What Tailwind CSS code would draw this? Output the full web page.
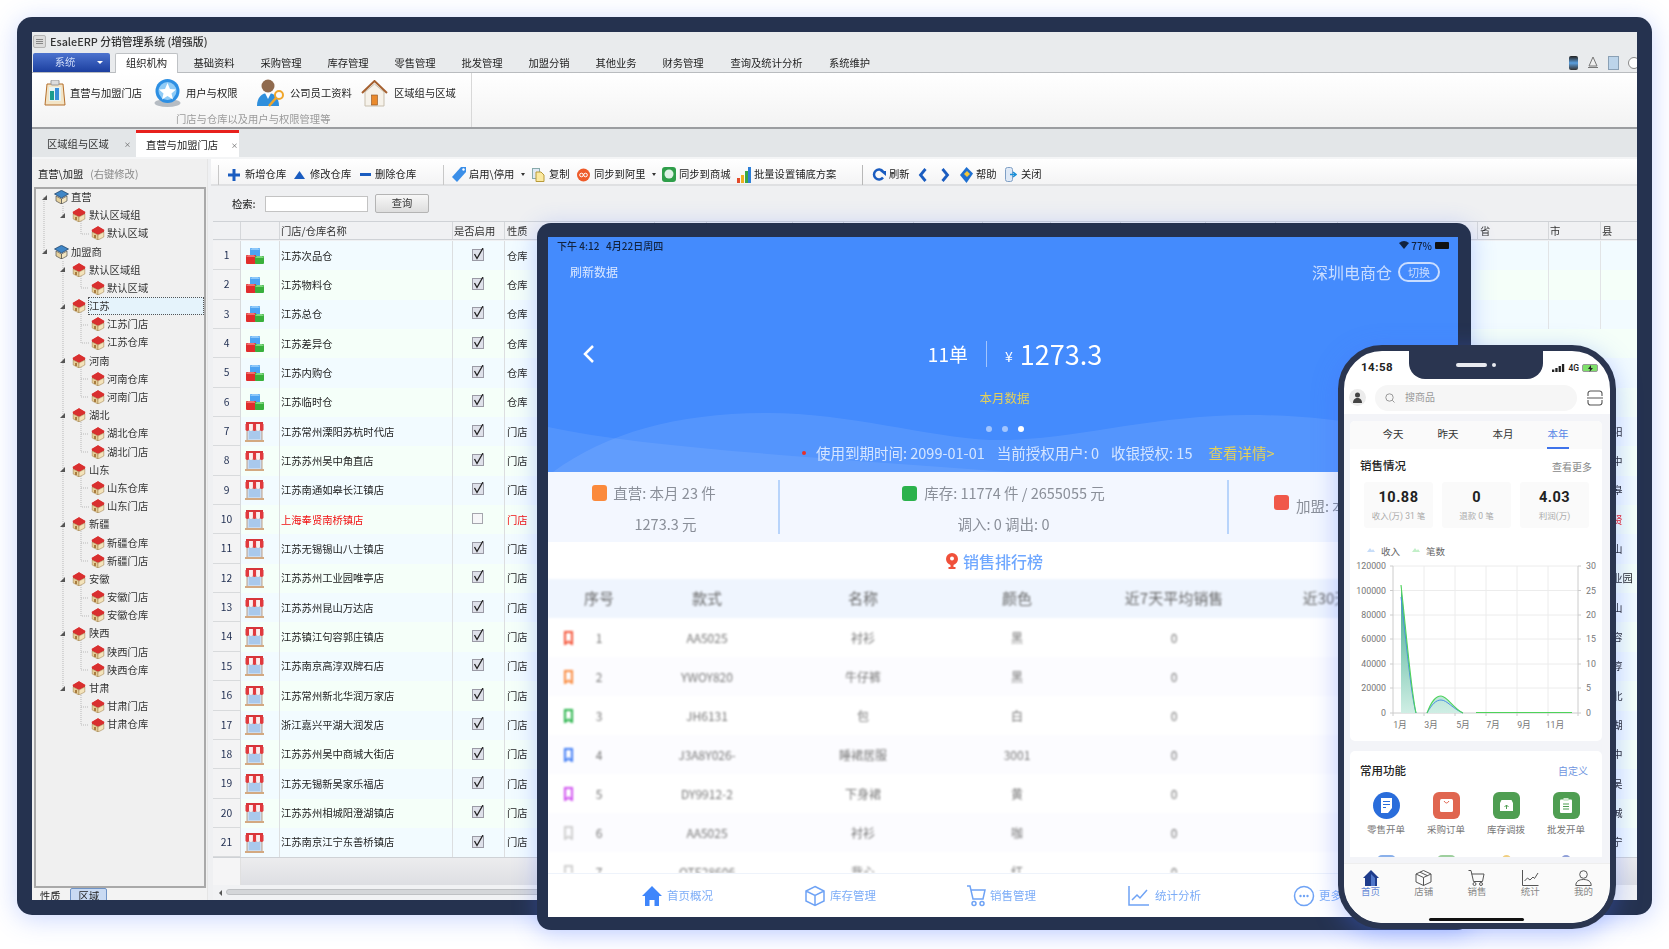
<!DOCTYPE html>
<html lang="zh">
<head>
<meta charset="utf-8">
<title>EsaleERP</title>
<script src="https://cdn.jsdelivr.net/npm/@tailwindcss/browser@4"></script>
</head>
<body class="m-0 bg-white">
<svg class="hidden" width="0" height="0">
  <defs>
    <symbol id="hr" viewBox="0 0 14 14"><polygon points="7,0.3 13.3,4 7,7.6 .7,4" fill="#e23b3b"/><polygon points="7,0.3 13.3,4 13,6 7,9 1,6 .7,4" fill="#d92f2f"/><polygon points="1.2,6 7,9 7,14 1.2,11" fill="#e8cf9a" stroke="#9a7a44" stroke-width=".5"/><polygon points="12.8,6 7,9 7,14 12.8,11" fill="#f3e3bb" stroke="#9a7a44" stroke-width=".5"/><rect x="3" y="9" width="2" height="3" fill="#a87c3f"/></symbol>
    <symbol id="hb" viewBox="0 0 15 14"><polygon points="7.5,.3 14.5,4 7.5,8 .5,4" fill="#3f86c6" stroke="#173a5e" stroke-width=".7"/><polygon points="2,6 7.5,9 7.5,14 2,11" fill="#e6d29f" stroke="#3a3a3a" stroke-width=".6"/><polygon points="13,6 7.5,9 7.5,14 13,11" fill="#f2e5c0" stroke="#3a3a3a" stroke-width=".6"/></symbol>
    <symbol id="bx" viewBox="0 0 18 16"><rect x="4" y="0" width="10" height="9" rx="1" fill="#4da3f2"/><path d="M4 2l2-2h6l2 2z" fill="#8cc8fa"/><rect x="0" y="7" width="10" height="9" rx="1" fill="#e02d2d"/><path d="M0 9l2-2h6l2 2z" fill="#f07070"/><rect x="9" y="8" width="9" height="8" rx="1" fill="#39b03c"/><path d="M9 10l2-2h5l2 2z" fill="#7ed67f"/></symbol>
    <symbol id="st" viewBox="0 0 19 20"><rect x="2" y="8" width="15" height="11" fill="#c8dcf2" stroke="#b98d6a" stroke-width=".8"/><rect x="4" y="9" width="11" height="8" fill="#a9c9ec"/><rect x="0" y="18" width="19" height="2" fill="#d3a981"/><rect x="1" y="0" width="17" height="2" fill="#d7363a"/><path d="M.5 2h3.6v6q-1.800 2-3.600 0zM7.700 2h3.600v6q-1.800 2-3.600 0zM14.900 2h3.600v6q-1.800 2-3.600 0z" fill="#e13a3e"/><path d="M4.100 2h3.600v6q-1.800 2-3.600 0zM11.300 2h3.600v6q-1.800 2-3.600 0z" fill="#fbeeee"/></symbol>
    <symbol id="ck" viewBox="0 0 14 16"><rect x=".5" y="1.500" width="11" height="11" fill="#dfe1ea" stroke="#9a9aa5"/><path d="M2.500 6L5 10.500L11 0" fill="none" stroke="#222" stroke-width="1.300"/></symbol>
    <symbol id="ri" viewBox="0 0 9 14"><path d="M1 1h7v12l-3.500-2.500L1 13z" fill="none" stroke="currentColor" stroke-width="2"/></symbol>
  </defs>
</svg>

<div class="relative w-[1669px] h-[949px] overflow-hidden bg-white pl-[17px] pt-[17px] font-['Noto_Sans_CJK_SC','Liberation_Sans',sans-serif] text-[#222]">

  <!-- desktop frame -->
  <div class="w-[1635px] h-[898px] rounded-[15px] bg-[#25324f] pt-[15px] pb-[15px] pl-[15px] pr-[15px] shadow-[0_4px_26px_rgba(70,110,255,0.28)]">
    <div class="relative w-[1605px] h-[868px] overflow-hidden bg-[#eff0f2] flex flex-col text-[10.3px] leading-none blur-[0.35px]">

      <!-- title -->
      <div class="h-[21px] shrink-0 flex items-center bg-[#e9ebed] pb-[2px]">
        <div class="ml-px w-[13px] h-[13px] border border-[#b5b5b5] rounded-[2px] bg-[#dcdcdc] flex flex-col justify-center gap-px px-[2px]"><span class="h-px bg-[#888]"></span><span class="h-px bg-[#888]"></span><span class="h-px bg-[#888]"></span></div>
        <span class="ml-[4px] text-[10.8px] font-medium text-[#333]">EsaleERP 分销管理系统 (增强版)</span>
      </div>

      <!-- menu -->
      <div class="h-[20px] shrink-0 flex items-end bg-[#e9ebed] border-b border-[#b9bcbf] relative">
        <div class="ml-px w-[77px] h-[19px] rounded-t-[2px] bg-gradient-to-b from-[#4d73cf] to-[#1c3f9f] flex items-center text-white"><span class="w-[64px] text-center text-[#cfdcf8]">系统</span><span class="w-0 h-0 border-x-[3px] border-x-transparent border-t-[3px] border-t-white"></span></div>
        <div class="ml-[5px] w-[63px] h-[20px] -mb-px bg-white border border-b-0 border-[#bfc2c5] rounded-t-[2px] flex items-center justify-center">组织机构</div>
        <div class="ml-[2.500px] flex h-[19px] items-center text-center pt-[2px]">
          <span class="w-[67px]">基础资料</span><span class="w-[67px]">采购管理</span><span class="w-[67px]">库存管理</span><span class="w-[67px]">零售管理</span><span class="w-[67px]">批发管理</span><span class="w-[67px]">加盟分销</span><span class="w-[67px]">其他业务</span><span class="w-[67px]">财务管理</span><span class="w-[100px]">查询及统计分析</span><span class="w-[66px]">系统维护</span>
        </div>
        <div class="ml-auto h-[19px] flex items-center gap-[9px] pr-0 -mr-[3px]">
          <span class="w-[9px] h-[14px] rounded-[2px] bg-gradient-to-b from-[#222] via-[#5aa0e0] to-[#333]"></span>
          <svg width="12" height="13" viewBox="0 0 12 13"><path d="M6 1L10 10H2zM1 11.500h10" fill="#eee" stroke="#777"/></svg>
          <span class="w-[11px] h-[14px] bg-[#bcd4ea] border border-[#8aa0b5]"></span>
          <span class="w-[12px] h-[12px] rounded-full border border-[#888] bg-white"></span>
        </div>
      </div>

      <!-- ribbon -->
      <div class="h-[54px] shrink-0 relative bg-gradient-to-b from-white to-[#f3f3f3] flex">
        <div class="w-[440px] border-r border-[#d8d8d8] flex flex-col">
          <div class="h-[40px] flex items-center">
            <svg class="ml-[12px] shrink-0" width="22" height="26" viewBox="0 0 22 26"><path d="M3 4h16l2 21H1z" fill="#f3e4c6" stroke="#b5702c"/><rect x="7" y="0" width="8" height="5" rx="1" fill="#ddd" stroke="#999"/><rect x="5" y="7" width="12" height="14" fill="#e6f3f3"/><rect x="6" y="11" width="4" height="9" fill="#1c9c8c"/><rect x="11" y="8" width="4" height="12" fill="#3a8ed8"/></svg>
            <span class="ml-[4px] w-[72px] whitespace-nowrap">直营与加盟门店</span>
            <svg class="ml-[12px] shrink-0" width="27" height="28" viewBox="0 0 27 28"><ellipse cx="13.500" cy="24" rx="13" ry="4" fill="#b6bcc3"/><circle cx="13.500" cy="12" r="12" fill="#2d8fe3"/><circle cx="13.500" cy="12" r="9" fill="#8fcbf6"/><polygon points="13.500,4 16,10 22,10.500 17.500,14.500 19,20.500 13.500,17 8,20.500 9.500,14.500 5,10.500 11,10" fill="#fff"/></svg>
            <span class="ml-[5px] w-[52px] whitespace-nowrap">用户与权限</span>
            <svg class="ml-[18px] shrink-0" width="29" height="30" viewBox="0 0 29 30"><circle cx="12" cy="8" r="6.500" fill="#8f6a4e"/><path d="M1 28c0-9 5-13 11-13s11 4 11 13z" fill="#2f8fdc"/><path d="M9 15l3 6 3-6z" fill="#fff"/><circle cx="23" cy="17" r="4" fill="none" stroke="#f0a62b" stroke-width="2"/><path d="M20 20l-7 8" stroke="#f0a62b" stroke-width="2.500"/></svg>
            <span class="ml-[5px] w-[62px] whitespace-nowrap">公司员工资料</span>
            <svg class="ml-[9px] shrink-0" width="27" height="27" viewBox="0 0 27 27"><path d="M4 12v14h19V12L13.500 4z" fill="#f6f2ea" stroke="#c8bfae"/><path d="M1 13L13.500 1 26 13" fill="none" stroke="#a5602f" stroke-width="2"/><rect x="10.500" y="15" width="6" height="10" fill="#ea8a2c" stroke="#8a4f1f" stroke-width=".6"/></svg>
            <span class="ml-[6px] whitespace-nowrap">区域组与区域</span>
          </div>
          <div class="pl-[144px] mt-[1px] text-[#9a9a9a] whitespace-nowrap">门店与仓库以及用户与权限管理等</div>
        </div>
      </div>
      <div class="h-[2px] shrink-0 bg-[#9b9da0]"></div>

      <!-- doc tabs -->
      <div class="h-[28px] shrink-0 bg-[#e3e6e8] flex items-end pl-px">
        <div class="w-[103px] h-[26px] flex items-center pl-[14px] text-[#333]"><span class="w-[77px]">区域组与区域</span><span class="text-[7px] text-[#555]">×</span></div>
        <div class="w-[103px] h-[27px] bg-white border-t-[3px] border-[#e8201c] flex items-center pl-[10px]"><span class="w-[85px]">直营与加盟门店</span><span class="text-[7px] text-[#555]">×</span></div>
      </div>
      <div class="h-[2px] shrink-0 bg-[#f4f5f6]"></div>

      <!-- main -->
      <div class="flex-1 min-h-0 flex">
        <!-- left -->
        <div class="w-[175px] shrink-0 flex flex-col bg-[#f0f0f0]">
          <div class="h-[28px] shrink-0 flex items-center pl-[6px] pt-[2px]"><span>直营\加盟</span><span class="ml-[7px] text-[#8a8a8a]">(右键修改)</span></div>
          <div class="ml-[2px] w-[172px] h-[701px] shrink-0 border-2 border-[#a9a9a9] bg-[#f0f0f0]">
            <div class="relative text-[#333] -mt-px">
              <svg class="absolute left-0 top-0" width="168" height="545" viewBox="0 0 168 545"><path d="M8 9V64M27 18V27M27 73V501M45 27V46H53M45 82V100H53M45 118V155H53M45 137H53M45 173V209H53M45 191H53M45 228V264H53M45 246H53M45 282V319H53M45 300H53M45 337V373H53M45 355H53M45 391V428H53M45 410H53M45 446V482H53M45 464H53M45 501V537H53M45 519H53" fill="none" stroke="#b9b9b9" stroke-dasharray="1 1"/></svg>
              <div class="relative h-[18.2px] flex items-center pl-[6px]"><svg width="5" height="5" viewBox="0 0 5 5"><path d="M5 0V5H0z" fill="#555"/></svg><svg class="ml-[7px]" width="15" height="14"><use href="#hb"/></svg><span class="ml-[2px]">直营</span></div>
              <div class="relative h-[18.2px] flex items-center pl-[24px]"><svg width="5" height="5" viewBox="0 0 5 5"><path d="M5 0V5H0z" fill="#555"/></svg><svg class="ml-[7px]" width="14" height="14"><use href="#hr"/></svg><span class="ml-[3px]">默认区域组</span></div>
              <div class="relative h-[18.2px] flex items-center pl-[55px]"><svg width="14" height="14"><use href="#hr"/></svg><span class="ml-[2px]">默认区域</span></div>
              <div class="relative h-[18.2px] flex items-center pl-[6px]"><svg width="5" height="5" viewBox="0 0 5 5"><path d="M5 0V5H0z" fill="#555"/></svg><svg class="ml-[7px]" width="15" height="14"><use href="#hb"/></svg><span class="ml-[2px]">加盟商</span></div>
              <div class="relative h-[18.2px] flex items-center pl-[24px]"><svg width="5" height="5" viewBox="0 0 5 5"><path d="M5 0V5H0z" fill="#555"/></svg><svg class="ml-[7px]" width="14" height="14"><use href="#hr"/></svg><span class="ml-[3px]">默认区域组</span></div>
              <div class="relative h-[18.2px] flex items-center pl-[55px]"><svg width="14" height="14"><use href="#hr"/></svg><span class="ml-[2px]">默认区域</span></div>
              <div class="relative h-[18.2px] flex items-center pl-[24px]"><svg width="5" height="5" viewBox="0 0 5 5"><path d="M5 0V5H0z" fill="#555"/></svg><svg class="ml-[7px]" width="14" height="14"><use href="#hr"/></svg><span class="ml-[2px] w-[116px] h-[18px] flex items-center bg-[#e5f3fb] border border-dotted border-[#555]">江苏</span></div>
              <div class="relative h-[18.2px] flex items-center pl-[55px]"><svg width="14" height="14"><use href="#hr"/></svg><span class="ml-[2px]">江苏门店</span></div>
              <div class="relative h-[18.2px] flex items-center pl-[55px]"><svg width="14" height="14"><use href="#hr"/></svg><span class="ml-[2px]">江苏仓库</span></div>
              <div class="relative h-[18.2px] flex items-center pl-[24px]"><svg width="5" height="5" viewBox="0 0 5 5"><path d="M5 0V5H0z" fill="#555"/></svg><svg class="ml-[7px]" width="14" height="14"><use href="#hr"/></svg><span class="ml-[3px]">河南</span></div>
              <div class="relative h-[18.2px] flex items-center pl-[55px]"><svg width="14" height="14"><use href="#hr"/></svg><span class="ml-[2px]">河南仓库</span></div>
              <div class="relative h-[18.2px] flex items-center pl-[55px]"><svg width="14" height="14"><use href="#hr"/></svg><span class="ml-[2px]">河南门店</span></div>
              <div class="relative h-[18.2px] flex items-center pl-[24px]"><svg width="5" height="5" viewBox="0 0 5 5"><path d="M5 0V5H0z" fill="#555"/></svg><svg class="ml-[7px]" width="14" height="14"><use href="#hr"/></svg><span class="ml-[3px]">湖北</span></div>
              <div class="relative h-[18.2px] flex items-center pl-[55px]"><svg width="14" height="14"><use href="#hr"/></svg><span class="ml-[2px]">湖北仓库</span></div>
              <div class="relative h-[18.2px] flex items-center pl-[55px]"><svg width="14" height="14"><use href="#hr"/></svg><span class="ml-[2px]">湖北门店</span></div>
              <div class="relative h-[18.2px] flex items-center pl-[24px]"><svg width="5" height="5" viewBox="0 0 5 5"><path d="M5 0V5H0z" fill="#555"/></svg><svg class="ml-[7px]" width="14" height="14"><use href="#hr"/></svg><span class="ml-[3px]">山东</span></div>
              <div class="relative h-[18.2px] flex items-center pl-[55px]"><svg width="14" height="14"><use href="#hr"/></svg><span class="ml-[2px]">山东仓库</span></div>
              <div class="relative h-[18.2px] flex items-center pl-[55px]"><svg width="14" height="14"><use href="#hr"/></svg><span class="ml-[2px]">山东门店</span></div>
              <div class="relative h-[18.2px] flex items-center pl-[24px]"><svg width="5" height="5" viewBox="0 0 5 5"><path d="M5 0V5H0z" fill="#555"/></svg><svg class="ml-[7px]" width="14" height="14"><use href="#hr"/></svg><span class="ml-[3px]">新疆</span></div>
              <div class="relative h-[18.2px] flex items-center pl-[55px]"><svg width="14" height="14"><use href="#hr"/></svg><span class="ml-[2px]">新疆仓库</span></div>
              <div class="relative h-[18.2px] flex items-center pl-[55px]"><svg width="14" height="14"><use href="#hr"/></svg><span class="ml-[2px]">新疆门店</span></div>
              <div class="relative h-[18.2px] flex items-center pl-[24px]"><svg width="5" height="5" viewBox="0 0 5 5"><path d="M5 0V5H0z" fill="#555"/></svg><svg class="ml-[7px]" width="14" height="14"><use href="#hr"/></svg><span class="ml-[3px]">安徽</span></div>
              <div class="relative h-[18.2px] flex items-center pl-[55px]"><svg width="14" height="14"><use href="#hr"/></svg><span class="ml-[2px]">安徽门店</span></div>
              <div class="relative h-[18.2px] flex items-center pl-[55px]"><svg width="14" height="14"><use href="#hr"/></svg><span class="ml-[2px]">安徽仓库</span></div>
              <div class="relative h-[18.2px] flex items-center pl-[24px]"><svg width="5" height="5" viewBox="0 0 5 5"><path d="M5 0V5H0z" fill="#555"/></svg><svg class="ml-[7px]" width="14" height="14"><use href="#hr"/></svg><span class="ml-[3px]">陕西</span></div>
              <div class="relative h-[18.2px] flex items-center pl-[55px]"><svg width="14" height="14"><use href="#hr"/></svg><span class="ml-[2px]">陕西门店</span></div>
              <div class="relative h-[18.2px] flex items-center pl-[55px]"><svg width="14" height="14"><use href="#hr"/></svg><span class="ml-[2px]">陕西仓库</span></div>
              <div class="relative h-[18.2px] flex items-center pl-[24px]"><svg width="5" height="5" viewBox="0 0 5 5"><path d="M5 0V5H0z" fill="#555"/></svg><svg class="ml-[7px]" width="14" height="14"><use href="#hr"/></svg><span class="ml-[3px]">甘肃</span></div>
              <div class="relative h-[18.2px] flex items-center pl-[55px]"><svg width="14" height="14"><use href="#hr"/></svg><span class="ml-[2px]">甘肃门店</span></div>
              <div class="relative h-[18.2px] flex items-center pl-[55px]"><svg width="14" height="14"><use href="#hr"/></svg><span class="ml-[2px]">甘肃仓库</span></div>
            </div>
          </div>
          <div class="flex-1 flex items-start bg-[#f3f3f3]">
            <span class="ml-[8px] mt-[3px]">性质</span>
            <span class="ml-[9px] w-[37px] h-[16px] bg-[#c9daf2] border border-[#6f93c6] rounded-t-[2px] pl-[8px] pt-[2px]">区域</span>
          </div>
        </div>

        <!-- right -->
        <div class="flex-1 min-w-0 flex flex-col pl-[3px] border-l border-[#e5e5e5]">
          <!-- toolbar -->
          <div class="h-[27px] shrink-0 flex items-center pt-[6px] bg-gradient-to-b from-white to-[#f4f4f5] border-b-2 border-[#dfe0e2] whitespace-nowrap">
            <span class="ml-[7px] w-px h-[20px] shrink-0 bg-[#c8c8c8]"></span>
            <svg class="ml-[9px] shrink-0" width="12" height="12" viewBox="0 0 12 12"><path d="M4.500 0h3v4.500H12v3H7.500V12h-3V7.500H0v-3h4.500z" fill="#1a5cc0"/></svg>
            <span class="ml-[5px] w-[41px] shrink-0">新增仓库</span>
            <svg class="ml-[8px] shrink-0" width="11" height="8" viewBox="0 0 11 8"><path d="M5.500 0L11 8H0z" fill="#1a5cc0"/></svg>
            <span class="ml-[5px] w-[41px] shrink-0">修改仓库</span>
            <span class="ml-[9px] w-[11px] h-[3px] shrink-0 bg-[#1a5cc0]"></span>
            <span class="ml-[4px] w-[41px] shrink-0">删除仓库</span>
            <span class="ml-[27px] w-px h-[20px] shrink-0 bg-[#c8c8c8]"></span>
            <svg class="ml-[8px] shrink-0" width="14" height="15" viewBox="0 0 14 15"><path d="M9 0h5v5L5 15 0 10z" fill="#3a8ee8"/><circle cx="11.500" cy="2.500" r="1.200" fill="#fff"/></svg>
            <span class="ml-[3px] w-[44px] shrink-0">启用\停用</span>
            <span class="ml-[8px] shrink-0 w-0 h-0 border-x-[2.500px] border-x-transparent border-t-[3px] border-t-[#333]"></span>
            <svg class="ml-[7px] shrink-0" width="13" height="14" viewBox="0 0 13 14"><rect x=".5" y=".5" width="7" height="10" fill="#dfe9f6" stroke="#8aa"/><path d="M4 4h5l3 3v6.500H4z" fill="#fbe9a0" stroke="#b89a3a"/></svg>
            <span class="ml-[4px] w-[21px] shrink-0">复制</span>
            <svg class="ml-[7px] shrink-0" width="13" height="14" viewBox="0 0 13 14"><circle cx="6.500" cy="7" r="6.500" fill="#ee5b2a"/><circle cx="4.500" cy="7" r="1.800" fill="none" stroke="#fff"/><circle cx="8.500" cy="7" r="1.800" fill="none" stroke="#fff"/></svg>
            <span class="ml-[4px] w-[51px] shrink-0">同步到阿里</span>
            <span class="ml-[7px] shrink-0 w-0 h-0 border-x-[2.500px] border-x-transparent border-t-[3px] border-t-[#333]"></span>
            <svg class="ml-[6px] shrink-0" width="14" height="15" viewBox="0 0 14 15"><rect width="14" height="15" rx="3" fill="#2f9e4a"/><circle cx="7" cy="7" r="4.500" fill="#dff2e6"/></svg>
            <span class="ml-[3px] w-[52px] shrink-0">同步到商城</span>
            <svg class="ml-[6px] shrink-0" width="14" height="16" viewBox="0 0 14 16"><rect x="0" y="11" width="3" height="5" fill="#e24a2a"/><rect x="4" y="8" width="3" height="8" fill="#f0b020"/><rect x="8" y="4" width="3" height="12" fill="#39a845"/><rect x="11" y="0" width="3" height="16" fill="#2d7fd8"/></svg>
            <span class="ml-[3px] w-[83px] shrink-0">批量设置铺底方案</span>
            <span class="ml-[25px] w-px h-[20px] shrink-0 bg-[#b8b8b8]"></span>
            <svg class="ml-[9px] shrink-0" width="14" height="13" viewBox="0 0 14 13"><path d="M11 3.500A5 5 0 1 0 11 9.500" fill="none" stroke="#1a5cc0" stroke-width="2.500"/><path d="M8 3h6v5z" fill="#1a5cc0"/></svg>
            <span class="ml-[3px] w-[21px] shrink-0">刷新</span>
            <svg class="ml-[8px] shrink-0" width="10" height="14" viewBox="0 0 10 14"><path d="M7.500 1L2.500 7l5 6" fill="none" stroke="#1a5cc0" stroke-width="2.800"/></svg>
            <svg class="ml-[12px] shrink-0" width="10" height="14" viewBox="0 0 10 14"><path d="M2.500 1l5 6-5 6" fill="none" stroke="#1a5cc0" stroke-width="2.800"/></svg>
            <svg class="ml-[10px] shrink-0" width="13" height="16" viewBox="0 0 13 16"><path d="M6.500 0L13 6.500 6.500 16 0 8z" fill="#1d6fd0"/><path d="M4 7l3-3 3 3-3 3z" fill="#f3c63a"/></svg>
            <span class="ml-[3px] w-[21px] shrink-0">帮助</span>
            <svg class="ml-[8px] shrink-0" width="12" height="15" viewBox="0 0 12 15"><rect x=".5" y=".5" width="7" height="14" rx="2" fill="#dfe9f6" stroke="#7f9fc5"/><path d="M5 7.500h5M8 5l3 2.500L8 10" fill="none" stroke="#1a8fd8" stroke-width="1.500"/></svg>
            <span class="ml-[4px] shrink-0">关闭</span>
          </div>
          <!-- search -->
          <div class="h-[35px] shrink-0 flex items-center text-[#333]">
            <span class="ml-[21px] w-[32px] font-medium pt-[2px]">检索:</span>
            <span class="w-[103px] h-[16px] bg-white border border-[#c3c3c3] ml-px"></span>
            <span class="ml-[7px] w-[54px] h-[19px] rounded-[2px] border border-[#b4b4b4] bg-gradient-to-b from-[#f7f7f7] to-[#dedede] flex items-center justify-center">查询</span>
          </div>
          <!-- grid -->
          <div class="flex-1 min-h-0 ml-[2px] flex flex-col">
            <div class="h-[19px] shrink-0 flex border-y border-[#cfd2d6] bg-[#f0f1f3] text-[#333] items-stretch">
              <span class="w-[28px] border-r border-[#d5d7da]"></span>
              <span class="w-[39px] border-r border-[#d5d7da]"></span>
              <span class="w-[173px] border-r border-[#d5d7da] flex items-center pl-px pt-[2px]">门店/仓库名称</span>
              <span class="w-[52px] border-r border-[#d5d7da] flex items-center pl-px pt-[2px]">是否启用</span>
              <span class="w-[150px] border-r border-[#d5d7da] flex items-center pl-[2px] pt-[2px]">性质</span>
              <span class="w-[52px] border-r border-[#d5d7da]"></span><span class="w-[86px] border-r border-[#d5d7da]"></span><span class="w-[51px] border-r border-[#d5d7da]"></span><span class="w-[70px] border-r border-[#d5d7da]"></span><span class="w-[69px] border-r border-[#d5d7da]"></span><span class="w-[68px] border-r border-[#d5d7da]"></span><span class="w-[70px] border-r border-[#d5d7da]"></span><span class="w-[85px] border-r border-[#d5d7da]"></span><span class="w-[70px] border-r border-[#d5d7da]"></span><span class="w-[62px] border-r border-[#d5d7da]"></span><span class="w-[140px] border-r border-[#d5d7da]"></span>
              <span class="w-[71px] border-r border-[#d5d7da] flex items-center pl-[2px] pt-[2px]">省</span>
              <span class="w-[52px] border-r border-[#d5d7da] flex items-center pl-px pt-[2px]">市</span>
              <span class="flex-1 flex items-center pl-px pt-[2px]">县</span>
            </div>
            <div class="h-[1px] shrink-0"></div>

            <div class="flex h-[29.35px] bg-[#f2fbff]"><span class="w-[28px] bg-[#f3f3f4] border-b border-r border-[#d8dadc] flex items-center justify-center text-[#1f2d50]">1</span><span class="w-[39px] border-r border-[#dcdee0] flex items-center pl-[5px]"><svg width="18" height="16"><use href="#bx"/></svg></span><span class="w-[173px] border-r border-[#dcdee0] flex items-center pl-px">江苏次品仓</span><span class="w-[52px] border-r border-[#dcdee0] flex items-center justify-center"><svg width="14" height="16"><use href="#ck"/></svg></span><span class="w-[973px] flex items-center pl-[2px]">仓库</span><span class="w-[71px] border-r border-[#e2e4e6]"></span><span class="w-[52px] border-r border-[#e2e4e6]"></span><span class="flex-1"></span></div>
            <div class="flex h-[29.35px] bg-[#f5fff9]"><span class="w-[28px] bg-[#f3f3f4] border-b border-r border-[#d8dadc] flex items-center justify-center text-[#1f2d50]">2</span><span class="w-[39px] border-r border-[#dcdee0] flex items-center pl-[5px]"><svg width="18" height="16"><use href="#bx"/></svg></span><span class="w-[173px] border-r border-[#dcdee0] flex items-center pl-px">江苏物料仓</span><span class="w-[52px] border-r border-[#dcdee0] flex items-center justify-center"><svg width="14" height="16"><use href="#ck"/></svg></span><span class="w-[973px] flex items-center pl-[2px]">仓库</span><span class="w-[71px] border-r border-[#e2e4e6]"></span><span class="w-[52px] border-r border-[#e2e4e6]"></span><span class="flex-1"></span></div>
            <div class="flex h-[29.35px] bg-[#f2fbff]"><span class="w-[28px] bg-[#f3f3f4] border-b border-r border-[#d8dadc] flex items-center justify-center text-[#1f2d50]">3</span><span class="w-[39px] border-r border-[#dcdee0] flex items-center pl-[5px]"><svg width="18" height="16"><use href="#bx"/></svg></span><span class="w-[173px] border-r border-[#dcdee0] flex items-center pl-px">江苏总仓</span><span class="w-[52px] border-r border-[#dcdee0] flex items-center justify-center"><svg width="14" height="16"><use href="#ck"/></svg></span><span class="w-[973px] flex items-center pl-[2px]">仓库</span><span class="w-[71px] border-r border-[#e2e4e6]"></span><span class="w-[52px] border-r border-[#e2e4e6]"></span><span class="flex-1"></span></div>
            <div class="flex h-[29.35px] bg-[#f5fff9]"><span class="w-[28px] bg-[#f3f3f4] border-b border-r border-[#d8dadc] flex items-center justify-center text-[#1f2d50]">4</span><span class="w-[39px] border-r border-[#dcdee0] flex items-center pl-[5px]"><svg width="18" height="16"><use href="#bx"/></svg></span><span class="w-[173px] border-r border-[#dcdee0] flex items-center pl-px">江苏差异仓</span><span class="w-[52px] border-r border-[#dcdee0] flex items-center justify-center"><svg width="14" height="16"><use href="#ck"/></svg></span><span class="w-[973px] flex items-center pl-[2px]">仓库</span><span class="w-[71px]"></span><span class="w-[52px]"></span><span class="flex-1"></span></div>
            <div class="flex h-[29.35px] bg-[#f2fbff]"><span class="w-[28px] bg-[#f3f3f4] border-b border-r border-[#d8dadc] flex items-center justify-center text-[#1f2d50]">5</span><span class="w-[39px] border-r border-[#dcdee0] flex items-center pl-[5px]"><svg width="18" height="16"><use href="#bx"/></svg></span><span class="w-[173px] border-r border-[#dcdee0] flex items-center pl-px">江苏内购仓</span><span class="w-[52px] border-r border-[#dcdee0] flex items-center justify-center"><svg width="14" height="16"><use href="#ck"/></svg></span><span class="w-[973px] flex items-center pl-[2px]">仓库</span><span class="w-[71px]"></span><span class="w-[52px]"></span><span class="flex-1"></span></div>
            <div class="flex h-[29.35px] bg-[#f5fff9]"><span class="w-[28px] bg-[#f3f3f4] border-b border-r border-[#d8dadc] flex items-center justify-center text-[#1f2d50]">6</span><span class="w-[39px] border-r border-[#dcdee0] flex items-center pl-[5px]"><svg width="18" height="16"><use href="#bx"/></svg></span><span class="w-[173px] border-r border-[#dcdee0] flex items-center pl-px">江苏临时仓</span><span class="w-[52px] border-r border-[#dcdee0] flex items-center justify-center"><svg width="14" height="16"><use href="#ck"/></svg></span><span class="w-[973px] flex items-center pl-[2px]">仓库</span><span class="w-[71px]"></span><span class="w-[52px]"></span><span class="flex-1"></span></div>
            <div class="flex h-[29.35px] bg-[#f2fbff]"><span class="w-[28px] bg-[#f3f3f4] border-b border-r border-[#d8dadc] flex items-center justify-center text-[#1f2d50]">7</span><span class="w-[39px] border-r border-[#dcdee0] flex items-center pl-[4px]"><svg width="19" height="20"><use href="#st"/></svg></span><span class="w-[173px] border-r border-[#dcdee0] flex items-center pl-px">江苏常州溧阳苏杭时代店</span><span class="w-[52px] border-r border-[#dcdee0] flex items-center justify-center"><svg width="14" height="16"><use href="#ck"/></svg></span><span class="w-[973px] flex items-center pl-[2px]">门店</span><span class="w-[71px]"></span><span class="w-[52px]"></span><span class="flex-1 flex items-center pl-px">溧阳</span></div>
            <div class="flex h-[29.35px] bg-[#f5fff9]"><span class="w-[28px] bg-[#f3f3f4] border-b border-r border-[#d8dadc] flex items-center justify-center text-[#1f2d50]">8</span><span class="w-[39px] border-r border-[#dcdee0] flex items-center pl-[4px]"><svg width="19" height="20"><use href="#st"/></svg></span><span class="w-[173px] border-r border-[#dcdee0] flex items-center pl-px">江苏苏州吴中角直店</span><span class="w-[52px] border-r border-[#dcdee0] flex items-center justify-center"><svg width="14" height="16"><use href="#ck"/></svg></span><span class="w-[973px] flex items-center pl-[2px]">门店</span><span class="w-[71px]"></span><span class="w-[52px]"></span><span class="flex-1 flex items-center pl-px">吴中</span></div>
            <div class="flex h-[29.35px] bg-[#f2fbff]"><span class="w-[28px] bg-[#f3f3f4] border-b border-r border-[#d8dadc] flex items-center justify-center text-[#1f2d50]">9</span><span class="w-[39px] border-r border-[#dcdee0] flex items-center pl-[4px]"><svg width="19" height="20"><use href="#st"/></svg></span><span class="w-[173px] border-r border-[#dcdee0] flex items-center pl-px">江苏南通如皋长江镇店</span><span class="w-[52px] border-r border-[#dcdee0] flex items-center justify-center"><svg width="14" height="16"><use href="#ck"/></svg></span><span class="w-[973px] flex items-center pl-[2px]">门店</span><span class="w-[71px]"></span><span class="w-[52px]"></span><span class="flex-1 flex items-center pl-px">如皋</span></div>
            <div class="flex h-[29.35px] bg-[#f5fff9] text-[#f01010]"><span class="w-[28px] bg-[#f3f3f4] border-b border-r border-[#d8dadc] flex items-center justify-center text-[#1f2d50]">10</span><span class="w-[39px] border-r border-[#dcdee0] flex items-center pl-[4px]"><svg width="19" height="20"><use href="#st"/></svg></span><span class="w-[173px] border-r border-[#dcdee0] flex items-center pl-px">上海奉贤南桥镇店</span><span class="w-[52px] border-r border-[#dcdee0] flex items-center justify-center pr-[3px] pb-[3px]"><span class="w-[11px] h-[11px] bg-[#f6f6f8] border border-[#a5a5ad]"></span></span><span class="w-[973px] flex items-center pl-[2px]">门店</span><span class="w-[71px]"></span><span class="w-[52px]"></span><span class="flex-1 flex items-center pl-px">奉贤</span></div>
            <div class="flex h-[29.35px] bg-[#f2fbff]"><span class="w-[28px] bg-[#f3f3f4] border-b border-r border-[#d8dadc] flex items-center justify-center text-[#1f2d50]">11</span><span class="w-[39px] border-r border-[#dcdee0] flex items-center pl-[4px]"><svg width="19" height="20"><use href="#st"/></svg></span><span class="w-[173px] border-r border-[#dcdee0] flex items-center pl-px">江苏无锡锡山八士镇店</span><span class="w-[52px] border-r border-[#dcdee0] flex items-center justify-center"><svg width="14" height="16"><use href="#ck"/></svg></span><span class="w-[973px] flex items-center pl-[2px]">门店</span><span class="w-[71px]"></span><span class="w-[52px]"></span><span class="flex-1 flex items-center pl-px">锡山</span></div>
            <div class="flex h-[29.35px] bg-[#f5fff9]"><span class="w-[28px] bg-[#f3f3f4] border-b border-r border-[#d8dadc] flex items-center justify-center text-[#1f2d50]">12</span><span class="w-[39px] border-r border-[#dcdee0] flex items-center pl-[4px]"><svg width="19" height="20"><use href="#st"/></svg></span><span class="w-[173px] border-r border-[#dcdee0] flex items-center pl-px">江苏苏州工业园唯亭店</span><span class="w-[52px] border-r border-[#dcdee0] flex items-center justify-center"><svg width="14" height="16"><use href="#ck"/></svg></span><span class="w-[973px] flex items-center pl-[2px]">门店</span><span class="w-[71px]"></span><span class="w-[52px]"></span><span class="flex-1 flex items-center pl-px whitespace-nowrap">工业园</span></div>
            <div class="flex h-[29.35px] bg-[#f2fbff]"><span class="w-[28px] bg-[#f3f3f4] border-b border-r border-[#d8dadc] flex items-center justify-center text-[#1f2d50]">13</span><span class="w-[39px] border-r border-[#dcdee0] flex items-center pl-[4px]"><svg width="19" height="20"><use href="#st"/></svg></span><span class="w-[173px] border-r border-[#dcdee0] flex items-center pl-px">江苏苏州昆山万达店</span><span class="w-[52px] border-r border-[#dcdee0] flex items-center justify-center"><svg width="14" height="16"><use href="#ck"/></svg></span><span class="w-[973px] flex items-center pl-[2px]">门店</span><span class="w-[71px]"></span><span class="w-[52px]"></span><span class="flex-1 flex items-center pl-px">昆山</span></div>
            <div class="flex h-[29.35px] bg-[#f5fff9]"><span class="w-[28px] bg-[#f3f3f4] border-b border-r border-[#d8dadc] flex items-center justify-center text-[#1f2d50]">14</span><span class="w-[39px] border-r border-[#dcdee0] flex items-center pl-[4px]"><svg width="19" height="20"><use href="#st"/></svg></span><span class="w-[173px] border-r border-[#dcdee0] flex items-center pl-px">江苏镇江句容郭庄镇店</span><span class="w-[52px] border-r border-[#dcdee0] flex items-center justify-center"><svg width="14" height="16"><use href="#ck"/></svg></span><span class="w-[973px] flex items-center pl-[2px]">门店</span><span class="w-[71px]"></span><span class="w-[52px]"></span><span class="flex-1 flex items-center pl-px">句容</span></div>
            <div class="flex h-[29.35px] bg-[#f2fbff]"><span class="w-[28px] bg-[#f3f3f4] border-b border-r border-[#d8dadc] flex items-center justify-center text-[#1f2d50]">15</span><span class="w-[39px] border-r border-[#dcdee0] flex items-center pl-[4px]"><svg width="19" height="20"><use href="#st"/></svg></span><span class="w-[173px] border-r border-[#dcdee0] flex items-center pl-px">江苏南京高淳双牌石店</span><span class="w-[52px] border-r border-[#dcdee0] flex items-center justify-center"><svg width="14" height="16"><use href="#ck"/></svg></span><span class="w-[973px] flex items-center pl-[2px]">门店</span><span class="w-[71px]"></span><span class="w-[52px]"></span><span class="flex-1 flex items-center pl-px">高淳</span></div>
            <div class="flex h-[29.35px] bg-[#f5fff9]"><span class="w-[28px] bg-[#f3f3f4] border-b border-r border-[#d8dadc] flex items-center justify-center text-[#1f2d50]">16</span><span class="w-[39px] border-r border-[#dcdee0] flex items-center pl-[4px]"><svg width="19" height="20"><use href="#st"/></svg></span><span class="w-[173px] border-r border-[#dcdee0] flex items-center pl-px">江苏常州新北华润万家店</span><span class="w-[52px] border-r border-[#dcdee0] flex items-center justify-center"><svg width="14" height="16"><use href="#ck"/></svg></span><span class="w-[973px] flex items-center pl-[2px]">门店</span><span class="w-[71px]"></span><span class="w-[52px]"></span><span class="flex-1 flex items-center pl-px">新北</span></div>
            <div class="flex h-[29.35px] bg-[#f2fbff]"><span class="w-[28px] bg-[#f3f3f4] border-b border-r border-[#d8dadc] flex items-center justify-center text-[#1f2d50]">17</span><span class="w-[39px] border-r border-[#dcdee0] flex items-center pl-[4px]"><svg width="19" height="20"><use href="#st"/></svg></span><span class="w-[173px] border-r border-[#dcdee0] flex items-center pl-px">浙江嘉兴平湖大润发店</span><span class="w-[52px] border-r border-[#dcdee0] flex items-center justify-center"><svg width="14" height="16"><use href="#ck"/></svg></span><span class="w-[973px] flex items-center pl-[2px]">门店</span><span class="w-[71px]"></span><span class="w-[52px]"></span><span class="flex-1 flex items-center pl-px">平湖</span></div>
            <div class="flex h-[29.35px] bg-[#f5fff9]"><span class="w-[28px] bg-[#f3f3f4] border-b border-r border-[#d8dadc] flex items-center justify-center text-[#1f2d50]">18</span><span class="w-[39px] border-r border-[#dcdee0] flex items-center pl-[4px]"><svg width="19" height="20"><use href="#st"/></svg></span><span class="w-[173px] border-r border-[#dcdee0] flex items-center pl-px">江苏苏州吴中商城大街店</span><span class="w-[52px] border-r border-[#dcdee0] flex items-center justify-center"><svg width="14" height="16"><use href="#ck"/></svg></span><span class="w-[973px] flex items-center pl-[2px]">门店</span><span class="w-[71px]"></span><span class="w-[52px]"></span><span class="flex-1 flex items-center pl-px">吴中</span></div>
            <div class="flex h-[29.35px] bg-[#f2fbff]"><span class="w-[28px] bg-[#f3f3f4] border-b border-r border-[#d8dadc] flex items-center justify-center text-[#1f2d50]">19</span><span class="w-[39px] border-r border-[#dcdee0] flex items-center pl-[4px]"><svg width="19" height="20"><use href="#st"/></svg></span><span class="w-[173px] border-r border-[#dcdee0] flex items-center pl-px">江苏无锡新吴家乐福店</span><span class="w-[52px] border-r border-[#dcdee0] flex items-center justify-center"><svg width="14" height="16"><use href="#ck"/></svg></span><span class="w-[973px] flex items-center pl-[2px]">门店</span><span class="w-[71px]"></span><span class="w-[52px]"></span><span class="flex-1 flex items-center pl-px">新吴</span></div>
            <div class="flex h-[29.35px] bg-[#f5fff9]"><span class="w-[28px] bg-[#f3f3f4] border-b border-r border-[#d8dadc] flex items-center justify-center text-[#1f2d50]">20</span><span class="w-[39px] border-r border-[#dcdee0] flex items-center pl-[4px]"><svg width="19" height="20"><use href="#st"/></svg></span><span class="w-[173px] border-r border-[#dcdee0] flex items-center pl-px">江苏苏州相城阳澄湖镇店</span><span class="w-[52px] border-r border-[#dcdee0] flex items-center justify-center"><svg width="14" height="16"><use href="#ck"/></svg></span><span class="w-[973px] flex items-center pl-[2px]">门店</span><span class="w-[71px]"></span><span class="w-[52px]"></span><span class="flex-1 flex items-center pl-px">相城</span></div>
            <div class="flex h-[29.35px] bg-[#f2fbff]"><span class="w-[28px] bg-[#f3f3f4] border-b border-r border-[#d8dadc] flex items-center justify-center text-[#1f2d50]">21</span><span class="w-[39px] border-r border-[#dcdee0] flex items-center pl-[4px]"><svg width="19" height="20"><use href="#st"/></svg></span><span class="w-[173px] border-r border-[#dcdee0] flex items-center pl-px">江苏南京江宁东善桥镇店</span><span class="w-[52px] border-r border-[#dcdee0] flex items-center justify-center"><svg width="14" height="16"><use href="#ck"/></svg></span><span class="w-[973px] flex items-center pl-[2px]">门店</span><span class="w-[71px]"></span><span class="w-[52px]"></span><span class="flex-1 flex items-center pl-px">江宁</span></div>

            <div class="h-[28px] shrink-0 flex border-t border-[#cfd2d6]"><span class="w-[28px] bg-[#f5f5f6] border-r border-[#e0e0e0]"></span><span class="flex-1 bg-gradient-to-b from-[#ececee] to-[#dedfe3]"></span></div>
            <div class="flex-1 flex items-center bg-[#f1f2f4]"><span class="ml-[6px] w-0 h-0 border-y-[3px] border-y-transparent border-r-[3px] border-r-[#555]"></span><span class="ml-[4px] w-[1380px] h-[6px] -mt-[2px] rounded-full bg-[#d4d6d9] border border-[#bfc1c4]"></span></div>
          </div>
        </div>
      </div>
    </div>
  </div>

  <!-- tablet -->
  <div class="absolute left-[537px] top-[223px] w-[934px] h-[707px] rounded-[14px] bg-[#25324f] pt-[14px] pl-[11px] pr-[13px] pb-[13px] shadow-[0_4px_24px_rgba(70,110,255,0.3)]">
    <div class="w-[910px] h-[680px] bg-white overflow-hidden flex flex-col">
      <div class="relative h-[235px] shrink-0 bg-[#448bfd] text-white">
        <svg class="absolute inset-0" width="910" height="235" viewBox="0 0 910 235"><path d="M5 235C60 195 130 176 220 176C300 176 380 200 442 203C520 205 600 178 700 178C790 178 860 195 910 205V235Z" fill="#fff" fill-opacity=".09"/><path d="M0 190C100 212 300 222 460 235H0Z" fill="#fff" fill-opacity=".08"/></svg>
        <div class="relative blur-[0.7px]">
          <div class="h-[16px] px-[9px] flex items-center justify-between text-[10px] font-medium text-[#12233f]">
            <span>下午 4:12&nbsp;&nbsp;&nbsp;4月22日周四</span>
            <span class="flex items-center gap-[2px]"><svg width="10" height="8" viewBox="0 0 10 8"><path d="M0 2q5-4 10 0L5 8z" fill="#12233f"/></svg>77%<span class="ml-px w-[14px] h-[7px] bg-[#111] rounded-[1px]"></span></span>
          </div>
          <div class="mt-[7px] h-[24px] flex items-center justify-between pl-[22px] pr-[18px]">
            <span class="text-[12px] text-[#dce9ff]">刷新数据</span>
            <span class="flex items-center text-[#c9ddff]"><span class="text-[16px] whitespace-nowrap">深圳电商仓</span><span class="ml-[6px] w-[42px] h-[20px] rounded-full border-2 border-[#c9ddff] text-[11px] flex items-center justify-center">切换</span></span>
          </div>
          <div class="mt-[50px] h-[40px] relative flex items-center justify-center pl-[24px]">
            <svg class="absolute left-[34px] top-[10px]" width="14" height="20" viewBox="0 0 14 20"><path d="M11 2L3 10l8 8" fill="none" stroke="#fff" stroke-width="2.500"/></svg>
            <span class="text-[19px]">11单</span><span class="mx-[18px] w-px h-[26px] bg-white/50"></span><span class="text-[14px] mr-[7px] mt-[5px]">¥</span><span class="text-[27px]">1273.3</span>
          </div>
          <div class="mt-[15px] h-[18px] flex items-center justify-center pl-[3px] text-[12.5px] text-[#e2d05c]">本月数据</div>
          <div class="mt-[19px] h-[6px] flex items-center justify-center gap-[10px] pl-[3px]"><span class="w-[6px] h-[6px] rounded-full bg-white/50"></span><span class="w-[6px] h-[6px] rounded-full bg-white/50"></span><span class="w-[6px] h-[6px] rounded-full bg-white"></span></div>
          <div class="mt-[11px] h-[20px] flex items-center pl-[254px] text-[14.5px] text-[#d5e5ff] whitespace-nowrap"><span class="w-[4px] h-[4px] rounded-full bg-[#e8302a] mr-[10px]"></span><span>使用到期时间: 2099-01-01</span><span class="ml-[12px]">当前授权用户: 0</span><span class="ml-[12px]">收银授权: 15</span><span class="ml-[16px] text-[#e2d05c]">查看详情&gt;</span></div>
        </div>
      </div>

      <div class="h-[70px] shrink-0 bg-[#f3f7ff] flex text-[14.5px] text-[#8a8f99] blur-[0.7px]">
        <div class="w-[232px] border-r-2 border-[#b8d4fb] my-[8px] flex flex-col items-center justify-center gap-[9px]">
          <div class="flex items-center mr-[18px] mt-[3px]"><span class="w-[15px] h-[16px] rounded-[3px] bg-[#fb8a3c] mr-[6px]"></span>直营: 本月 23 件</div>
          <div class="pl-[5px]">1273.3 元</div>
        </div>
        <div class="w-[449px] border-r-2 border-[#b8d4fb] my-[8px] flex flex-col items-center justify-center gap-[9px]">
          <div class="flex items-center whitespace-nowrap mt-[3px]"><span class="w-[15px] h-[15px] rounded-[3px] bg-[#2bb24c] mr-[7px]"></span>库存: 11774 件 / 2655055 元</div>
          <div>调入: 0 调出: 0</div>
        </div>
        <div class="flex-1 pl-[45px] my-[8px] flex items-start pt-[15px] whitespace-nowrap"><span class="w-[15px] h-[15px] rounded-[3px] bg-[#f0584a] mr-[7px]"></span>加盟: 本月</div>
      </div>

      <div class="h-[37px] shrink-0 flex items-center justify-center pr-[18px] text-[16px] font-medium text-[#70a8ff] blur-[0.7px]"><svg class="mr-[4px]" width="14" height="16" viewBox="0 0 14 16"><path d="M7 0a6 6 0 0 1 6 6c0 3-2 5-4.500 6v2h2v2h-7v-2h2v-2C3 11 1 9 1 6a6 6 0 0 1 6-6z" fill="#f0503a"/><circle cx="7" cy="5.500" r="2" fill="#fff"/></svg>销售排行榜</div>

      <div class="flex-1 min-h-0 overflow-hidden blur-[0.8px]">
        <div class="h-[39px] bg-[#eff5fe] grid grid-cols-[102px_114px_198px_110px_204px_160px] items-center text-center text-[15px] text-[#666]"><span>序号</span><span>款式</span><span>名称</span><span>颜色</span><span>近7天平均销售</span><span>近30天平均销售</span></div>
        <div class="h-[39px] bg-white grid grid-cols-[102px_114px_198px_110px_204px] items-center text-center text-[12px] text-[#777]"><span class="relative">1<svg class="absolute left-[16px] top-[2px] text-[#f5553a]" width="9" height="14"><use href="#ri"/></svg></span><span>AA5025</span><span>衬衫</span><span>黑</span><span>0</span></div>
        <div class="h-[39px] bg-[#fcfcff] grid grid-cols-[102px_114px_198px_110px_204px] items-center text-center text-[12px] text-[#777]"><span class="relative">2<svg class="absolute left-[16px] top-[2px] text-[#fb8b3f]" width="9" height="14"><use href="#ri"/></svg></span><span>YWOY820</span><span>牛仔裤</span><span>黑</span><span>0</span></div>
        <div class="h-[39px] bg-white grid grid-cols-[102px_114px_198px_110px_204px] items-center text-center text-[12px] text-[#777]"><span class="relative">3<svg class="absolute left-[16px] top-[2px] text-[#28b44a]" width="9" height="14"><use href="#ri"/></svg></span><span>JH6131</span><span>包</span><span>白</span><span>0</span></div>
        <div class="h-[39px] bg-[#fcfcff] grid grid-cols-[102px_114px_198px_110px_204px] items-center text-center text-[12px] text-[#777]"><span class="relative">4<svg class="absolute left-[16px] top-[2px] text-[#3f7cf5]" width="9" height="14"><use href="#ri"/></svg></span><span>J3A8Y026-</span><span>睡裙居服</span><span>3001</span><span>0</span></div>
        <div class="h-[39px] bg-white grid grid-cols-[102px_114px_198px_110px_204px] items-center text-center text-[12px] text-[#777]"><span class="relative">5<svg class="absolute left-[16px] top-[2px] text-[#d050f0]" width="9" height="14"><use href="#ri"/></svg></span><span>DY9912-2</span><span>下身裙</span><span>黄</span><span>0</span></div>
        <div class="h-[39px] bg-[#fcfcff] grid grid-cols-[102px_114px_198px_110px_204px] items-center text-center text-[12px] text-[#777]"><span class="relative">6<svg class="absolute left-[16px] top-[2px] text-[#cfcfcf]" width="9" height="14"><use href="#ri"/></svg></span><span>AA5025</span><span>衬衫</span><span>咖</span><span>0</span></div>
        <div class="h-[39px] bg-white grid grid-cols-[102px_114px_198px_110px_204px] items-center text-center text-[12px] text-[#777]"><span class="relative">7<svg class="absolute left-[16px] top-[2px] text-[#cfcfcf]" width="9" height="14"><use href="#ri"/></svg></span><span>OTE28606</span><span>背心</span><span>红</span><span>0</span></div>
      </div>

      <div class="h-[44px] shrink-0 bg-white border-t border-[#eef3fb] flex items-center text-[11.5px] text-[#7dadf7] blur-[0.7px] whitespace-nowrap">
        <svg class="ml-[94px]" width="20" height="20" viewBox="0 0 20 20"><path d="M10 0L20 10h-3v10h-4.500v-6h-5v6H3V10H0z" fill="#3f86fb"/></svg><span class="ml-[5px]">首页概况</span>
        <svg class="ml-[91px]" width="22" height="22" viewBox="0 0 22 22"><path d="M11 1.500L20 6v10l-9 4.500L2 16V6zM2 6l9 4.500L20 6M11 10.500v10" fill="none" stroke="#6fa3f5" stroke-width="1.500"/></svg><span class="ml-[4px]">库存管理</span>
        <svg class="ml-[90px]" width="20" height="22" viewBox="0 0 20 22"><path d="M1 1h3l3 13h10l2-9H5" fill="none" stroke="#6fa3f5" stroke-width="1.500"/><circle cx="8" cy="18.500" r="2" fill="none" stroke="#6fa3f5" stroke-width="1.500"/><circle cx="16" cy="18.500" r="2" fill="none" stroke="#6fa3f5" stroke-width="1.500"/></svg><span class="ml-[4px]">销售管理</span>
        <svg class="ml-[92px]" width="22" height="22" viewBox="0 0 22 22"><path d="M1 1v19h20M4 15l5-5 3 3 7-8" fill="none" stroke="#6fa3f5" stroke-width="1.500"/></svg><span class="ml-[5px]">统计分析</span>
        <svg class="ml-[92px]" width="22" height="22" viewBox="0 0 22 22"><circle cx="11" cy="11" r="9.500" fill="none" stroke="#6fa3f5" stroke-width="1.500"/><circle cx="7.500" cy="11" r="1.200" fill="#6fa3f5"/><circle cx="11" cy="11" r="1.200" fill="#6fa3f5"/><circle cx="14.500" cy="11" r="1.200" fill="#6fa3f5"/></svg><span class="ml-[4px]">更多</span>
      </div>
    </div>
  </div>

  <!-- phone -->
  <div class="absolute left-[1338px] top-[345px] w-[278px] h-[584px] rounded-[44px] border-[6px] border-[#2a3550] bg-white overflow-hidden shadow-[0_6px_26px_rgba(70,110,255,0.35)] font-['Roboto','Noto_Sans_CJK_SC',sans-serif] text-[#333]">
    <div class="relative w-full h-full flex flex-col rounded-[38px] overflow-hidden">
      <div class="relative h-[33px] shrink-0 flex items-center justify-between pl-[17px] pr-[12px] pt-[1px]">
        <span class="text-[11.5px] font-bold tracking-[0.5px] text-[#222]">14:58</span>
        <div class="absolute left-[65px] top-0 w-[134px] h-[28px] rounded-b-[16px] bg-[#2a3550] flex items-center justify-center gap-[5px]"><span class="w-[31px] h-[4px] rounded-full bg-[#e8eaf0]"></span><span class="w-[4px] h-[4px] rounded-full bg-[#e8eaf0]"></span></div>
        <div class="flex items-center">
          <svg width="13" height="8" viewBox="0 0 13 8"><rect x="0" y="5.500" width="2.300" height="2.500" fill="#222"/><rect x="3.300" y="4" width="2.300" height="4" fill="#222"/><rect x="6.600" y="2" width="2.300" height="6" fill="#222"/><rect x="9.900" y="0" width="2.300" height="8" fill="#222"/></svg>
          <span class="ml-[3px] text-[8.5px] font-medium text-[#222]">4G</span>
          <span class="ml-[3px] w-[16px] h-[8px] rounded-[2px] border border-[#999] bg-[#7ee06a] flex items-center justify-center"><svg width="5" height="7" viewBox="0 0 5 7"><path d="M3 0L0 4h2L1.500 7 5 3H3z" fill="#222"/></svg></span>
        </div>
      </div>
      <div class="h-[30px] shrink-0 flex items-center pl-[5px] pb-[3px]">
        <span class="w-[17px] h-[17px] rounded-full bg-[#ececec] flex items-center justify-center"><svg width="11" height="11" viewBox="0 0 11 11"><circle cx="5.500" cy="3" r="2.500" fill="#444"/><path d="M1 11c0-3.500 2-5 4.500-5s4.500 1.500 4.500 5z" fill="#444"/></svg></span>
        <div class="ml-[9px] w-[202px] h-[26px] rounded-full bg-[#f6f6f6] flex items-center pl-[10px] text-[10px] text-[#999]"><svg width="10" height="10" viewBox="0 0 10 10"><circle cx="4.500" cy="4.500" r="3.700" fill="none" stroke="#999"/><path d="M7.300 7.300L9.500 9.500" stroke="#999"/></svg><span class="ml-[10px]">搜商品</span></div>
        <svg class="ml-[10px]" width="16" height="16" viewBox="0 0 16 16"><path d="M1 6V3.500A2.500 2.500 0 0 1 3.500 1h9A2.500 2.500 0 0 1 15 3.500V6M1 10v2.500A2.500 2.500 0 0 0 3.500 15h9a2.500 2.500 0 0 0 2.500-2.500V10" fill="none" stroke="#555" stroke-width="1.100"/><path d="M0 8h16" stroke="#555" stroke-width="1.100"/></svg>
      </div>

      <div class="flex-1 min-h-0 bg-[#f3f4f8] pl-[6px] pr-[8px] pt-[7px] overflow-hidden">
        <div class="bg-white rounded-[5px] h-[320px] overflow-hidden">
          <div class="h-[28px] bg-[#fafafa] flex items-center text-[10.5px] text-[#333]">
            <span class="ml-[32px] w-[22px] text-center">今天</span><span class="ml-[33px] w-[22px] text-center">昨天</span><span class="ml-[33px] w-[22px] text-center">本月</span><span class="ml-[33px] w-[22px] h-[28px] flex items-center justify-center border-b-2 border-[#3f73ea] text-[#5585e6] pt-[2px]">本年</span>
          </div>
          <div class="h-[33px] flex items-center justify-between pl-[10px] pr-[10px] pt-[3px]"><span class="text-[11.5px] font-medium text-[#222]">销售情况</span><span class="text-[10px] text-[#888]">查看更多</span></div>
          <div class="h-[46px] flex gap-[9px] pl-[14px] text-center">
            <div class="w-[69px] rounded-[3px] bg-[#fafafa] flex flex-col items-center pt-[7px]"><span class="text-[14.5px] font-bold leading-[17px] tracking-[0.5px] text-[#222]">10.88</span><span class="mt-[4px] text-[8.5px] leading-[12px] text-[#aaa] whitespace-nowrap">收入(万) 31 笔</span></div>
            <div class="w-[69px] rounded-[3px] bg-[#fafafa] flex flex-col items-center pt-[7px]"><span class="text-[14.5px] font-bold leading-[17px] text-[#222]">0</span><span class="mt-[4px] text-[8.5px] leading-[12px] text-[#aaa] whitespace-nowrap">退款 0 笔</span></div>
            <div class="w-[69px] rounded-[3px] bg-[#fafafa] flex flex-col items-center pt-[7px]"><span class="text-[14.5px] font-bold leading-[17px] tracking-[0.5px] text-[#222]">4.03</span><span class="mt-[4px] text-[8.5px] leading-[12px] text-[#aaa] whitespace-nowrap">利润(万)</span></div>
          </div>
          <svg class="mt-[12px] block" width="252" height="201" viewBox="1350 540 252 201">
            <defs><linearGradient id="fg" x1="0" y1="0" x2="0" y2="1"><stop offset="0" stop-color="#3aa88a"/><stop offset="1" stop-color="#cfeee4"/></linearGradient></defs>
            <path d="M1367 552l3-4 3 4zM1371 552l2-3 2 3z" fill="#c6dcf8"/><text x="1381" y="555" font-size="9.500" fill="#666">收入</text>
            <path d="M1412 552l3-4 3 4zM1416 552l2-3 2 3z" fill="#c2efc8"/><text x="1426" y="555" font-size="9.500" fill="#666">笔数</text>
            <path d="M1393 566H1578M1393 590.500H1578M1393 615H1578M1393 639H1578M1393 664H1578M1393 688H1578" stroke="#ececec"/>
            <path d="M1424 566V713M1455 566V713M1486 566V713M1517 566V713M1548 566V713" stroke="#ececec"/>
            <path d="M1393 566V713M1578 566V713M1393 713H1578" stroke="#cccccc"/>
            <path d="M1390 566h3M1390 590.500h3M1390 615h3M1390 639h3M1390 664h3M1390 688h3M1390 713h3M1578 566h3M1578 590.500h3M1578 615h3M1578 639h3M1578 664h3M1578 688h3M1578 713h3M1393 713v3M1424 713v3M1455 713v3M1486 713v3M1517 713v3M1548 713v3M1578 713v3" stroke="#ccc"/>
            <path d="M1401 585C1406 630 1411 690 1416 713H1401ZM1427 713C1432 700 1436 696 1441 696C1447 696 1453 708 1463 713Z" fill="url(#fg)"/>
            <path d="M1401 597C1406 640 1411 695 1416 713M1427 713C1432 704 1436 700 1441 700C1447 700 1453 709 1463 713" fill="none" stroke="#4a90e2" stroke-width="1"/>
            <path d="M1401 585C1406 630 1411 690 1416 713M1427 713C1432 700 1436 696 1441 696C1447 696 1453 708 1463 713M1476 712.500H1572" fill="none" stroke="#4ed35a" stroke-width="1.100"/>
            <g font-size="8.800" fill="#777" text-anchor="end"><text x="1386" y="569">120000</text><text x="1386" y="593.500">100000</text><text x="1386" y="618">80000</text><text x="1386" y="642">60000</text><text x="1386" y="667">40000</text><text x="1386" y="691">20000</text><text x="1386" y="716">0</text></g>
            <g font-size="8.800" fill="#777"><text x="1586" y="569">30</text><text x="1586" y="593.500">25</text><text x="1586" y="618">20</text><text x="1586" y="642">15</text><text x="1586" y="667">10</text><text x="1586" y="691">5</text><text x="1586" y="716">0</text></g>
            <g font-size="8.800" fill="#777" text-anchor="middle"><text x="1400" y="728">1月</text><text x="1431" y="728">3月</text><text x="1463" y="728">5月</text><text x="1493" y="728">7月</text><text x="1524" y="728">9月</text><text x="1555" y="728">11月</text></g>
          </svg>
        </div>
        <div class="mt-[10px] bg-white rounded-t-[5px] h-[106px] overflow-hidden">
          <div class="h-[41px] flex items-center justify-between pl-[10px] pr-[14px]"><span class="text-[11.5px] font-medium text-[#222]">常用功能</span><span class="text-[10px] text-[#6f95e0]">自定义</span></div>
          <div class="flex pl-[6px] text-[9.500px] text-[#777] text-center">
            <div class="w-[60px] flex flex-col items-center">
              <span class="w-[27px] h-[27px] rounded-full bg-[#2a6ddb] flex items-center justify-center"><svg width="13" height="15" viewBox="0 0 13 15"><path d="M1 0h11v10l-4 5H1z" fill="#fff"/><path d="M3 3.500h7M3 6.500h7M3 9.500h3" stroke="#2a6ddb" stroke-width="1.200"/></svg></span>
              <span class="mt-[4px] h-[13px] leading-[13px]">零售开单</span>
            </div>
            <div class="w-[60px] flex flex-col items-center">
              <span class="w-[27px] h-[27px] rounded-[6px] bg-[#e06650] flex items-center justify-center"><svg width="13" height="13" viewBox="0 0 13 13"><rect width="13" height="13" rx="1.500" fill="#fff"/><path d="M4 2q2.500 4 5 0" fill="none" stroke="#e06650"/></svg></span>
              <span class="mt-[4px] h-[13px] leading-[13px]">采购订单</span>
            </div>
            <div class="w-[60px] flex flex-col items-center">
              <span class="w-[27px] h-[27px] rounded-[6px] bg-[#4f9e52] flex items-center justify-center"><svg width="13" height="11" viewBox="0 0 13 11"><path d="M1.500 0h10L13 3v8H0V3z" fill="#fff"/><path d="M6.500 5v4M4.500 7l2-2 2 2" fill="none" stroke="#4f9e52"/></svg></span>
              <span class="mt-[4px] h-[13px] leading-[13px]">库存调拨</span>
            </div>
            <div class="w-[60px] flex flex-col items-center">
              <span class="w-[27px] h-[27px] rounded-[6px] bg-[#4f9e52] flex items-center justify-center"><svg width="12" height="15" viewBox="0 0 12 15"><rect y="1.500" width="12" height="13.500" rx="1" fill="#fff"/><rect x="3.500" y="0" width="5" height="3" fill="#cfe8cf"/><path d="M3 6h6M3 8.500h6M3 11h6" stroke="#4f9e52"/></svg></span>
              <span class="mt-[4px] h-[13px] leading-[13px]">批发开单</span>
            </div>
          </div>
          <div class="flex pl-[6px] mt-[19px]">
            <div class="w-[60px] flex justify-center"><span class="w-[19px] h-[19px] rounded-t-[5px] bg-[#8ab0ea]"></span></div>
            <div class="w-[60px] flex justify-center"><span class="w-[19px] h-[19px] rounded-t-[5px] bg-[#9ecf9e]"></span></div>
            <div class="w-[60px] flex justify-center"><span class="w-[9px] h-[19px] rounded-t-[5px] bg-[#f0cf80]"></span></div>
            <div class="w-[60px] flex justify-center"><span class="w-[10px] h-[19px] rounded-t-[5px] bg-[#8f9fd8]"></span></div>
          </div>
        </div>
      </div>

      <div class="relative h-[60px] shrink-0 bg-[#fafafa] border-t border-[#eeeeee] text-[9.500px] text-[#888] pt-[6px]">
        <div class="grid grid-cols-5 pl-[0px] text-center">
          <div class="flex flex-col items-center"><svg width="16" height="16" viewBox="0 0 16 16"><path d="M8 0L16 8h-2v8H2V8H0z" fill="#1e3c8c"/><path d="M8 4L12 8v8H8z" fill="#5077c9"/></svg><span class="text-[#6488d6] leading-[12px]">首页</span></div>
          <div class="flex flex-col items-center"><svg width="17" height="16" viewBox="0 0 17 16"><path d="M8.500 .5L16 4v8l-7.500 3.500L1 12V4zM1 4l7.500 3.500L16 4M8.500 7.500v8M5 2.200l7.500 3.500" fill="none" stroke="#555"/></svg><span class="leading-[12px]">店铺</span></div>
          <div class="flex flex-col items-center"><svg width="17" height="16" viewBox="0 0 17 16"><path d="M.5 .5h2.500l2.500 11h9l1.500-7.500H3.500" fill="none" stroke="#555"/><circle cx="6.500" cy="14" r="1.500" fill="none" stroke="#555"/><circle cx="13" cy="14" r="1.500" fill="none" stroke="#555"/></svg><span class="leading-[12px]">销售</span></div>
          <div class="flex flex-col items-center"><svg width="17" height="16" viewBox="0 0 17 16"><path d="M.5 0v15.500H16.500M2.500 11l3-3 2.500 2 3-3 1.500 1.500L16 3" fill="none" stroke="#555"/></svg><span class="leading-[12px]">统计</span></div>
          <div class="flex flex-col items-center"><svg width="17" height="16" viewBox="0 0 17 16"><circle cx="8.500" cy="4.500" r="3.800" fill="none" stroke="#555"/><path d="M.8 15.500c0-4 3-6 7.700-6s7.700 2 7.700 6z" fill="none" stroke="#555"/></svg><span class="leading-[12px]">我的</span></div>
        </div>
        <span class="absolute left-[85px] bottom-[2px] w-[95px] h-[3px] rounded-full bg-[#111]"></span>
      </div>
    </div>
  </div>
</div>
</body>
</html>
